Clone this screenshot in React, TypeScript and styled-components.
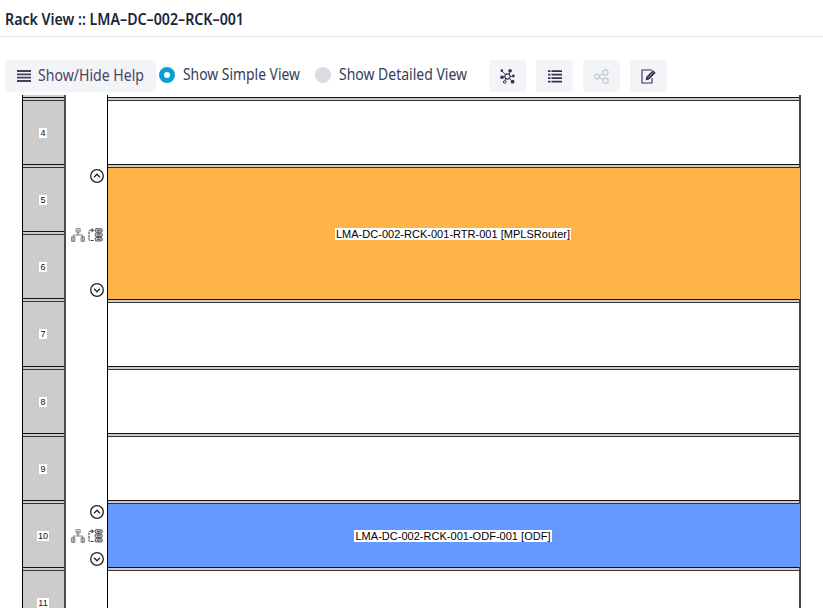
import React from "react";
import styled, { createGlobalStyle } from "styled-components";

const Global = createGlobalStyle`
  * { box-sizing: border-box; }
  html, body { margin: 0; background: #fff; overflow: hidden; }
`;
const Page = styled.div`
  width: 823px; height: 608px; overflow: hidden; background: #fff;
  display: flex; flex-direction: column;
  font-family: "Noto Sans", sans-serif; color: #1f2a3c;
`;
const Header = styled.header`
  height: 37px; flex: none; padding: 3px 5px 0; border-bottom: 1px solid #e4e7ed;
  display: flex; align-items: center;
`;
const Title = styled.h1`
  margin: 0; font-size: 15.5px; line-height: 20px; font-weight: 600; color: #1b2638;
  display: flex; gap: 3px;
`;
const Fit = styled.svg`display: block; flex: none; overflow: visible;`;
const Toolbar = styled.div`
  height: 58px; flex: none; padding: 23px 0 0 5px; display: flex; align-items: flex-start;
`;
const HelpButton = styled.button`
  width: 151px; height: 32px; border: 0; border-radius: 4px; background: #f3f4f7; padding: 0 0 0 12px;
  display: flex; align-items: center; gap: 7px; flex: none; font-family: inherit;
`;
const Radio = styled.label<{ $left: number }>`
  display: flex; align-items: center; height: 30px; margin-left: ${p => p.$left}px; gap: 8px;
`;
const Dot = styled.span<{ $on?: boolean }>`
  width: 16px; height: 16px; border-radius: 50%; flex: none;
  background: ${p => (p.$on ? "#fff" : "#dadde3")};
  border: ${p => (p.$on ? "5px solid #06a0d3" : "0")};
`;
const Tools = styled.div`display: flex; gap: 10px; margin-left: 22px;`;
const Tool = styled.button`
  width: 37px; height: 32px; border: 0; border-radius: 4px; background: #f3f4f7; padding: 0;
  display: flex; align-items: center; justify-content: center;
`;
const Rack = styled.main`
  flex: none; height: 513px; padding-left: 22px; display: grid; grid-template-columns: 44px 41px 694px;
  overflow: hidden;
`;
const Units = styled.div`
  background: #ccc; border-left: 1px solid #000; border-right: 2px solid #4c4c4c;
  display: flex; flex-direction: column;
`;
const Slots = styled.div`
  border-left: 1px solid #000; border-right: 2px solid #444; display: flex; flex-direction: column;
`;
const Divider = styled.div`
  height: 4px; flex: none; background: #ccc; border-top: 1px solid #111; border-bottom: 1px solid #333;
`;
const Cell = styled.div<{ $h: number; $bg?: string }>`
  height: ${p => p.$h}px; flex: none; background: ${p => p.$bg || "transparent"};
  margin-right: ${p => (p.$bg ? "-1px" : "0")};
  display: flex; align-items: center; justify-content: center;
`;
const Num = styled.span`
  background: #fff; color: #111; font: 9px/10px "Liberation Sans", Arial, sans-serif; padding: 0 1px; margin: 0 0 0 -1px;
`;
const Name = styled.span`
  background: #fff; color: #000; font: 11px/12px "Liberation Sans", Arial, sans-serif; padding: 0 1px;
  margin-left: -2px; letter-spacing: 0.02px; white-space: nowrap;
`;
const Controls = styled.div`display: flex; flex-direction: column;`;
const Group = styled.div<{ $top: number; $h: number }>`
  margin-top: ${p => p.$top}px; height: ${p => p.$h}px; flex: none; padding: 0 3px 0 5px;
  display: flex; flex-direction: column; align-items: flex-end; justify-content: space-between;
`;
const Actions = styled.div<{ $drop: number }>`
  display: flex; gap: 3px; width: 32px; margin-right: 1px; padding-top: ${p => p.$drop}px;
`;

const FitText = ({ text, width, size, weight = 400, color = "#34405a" }: {
  text: string; width: number; size: number; weight?: number; color?: string;
}) => (
  <Fit width={width} height="20">
    <text x="0" y="15" textLength={width} lengthAdjust="spacingAndGlyphs" fontSize={size} fontWeight={weight} fill={color}>{text}</text>
  </Fit>
);

const Lines = () => (
  <svg width="14" height="12" viewBox="0 0 14 12">
    <path d="M0 1h14M0 4.3h14M0 7.7h14M0 11h14" stroke="#454059" strokeWidth="1.8" />
  </svg>
);
const ListIcon = () => (
  <svg width="14" height="13" viewBox="0 0 14 13">
    <path d="M0 1.2h2.5M0 4.7h2.5M0 8.2h2.5M0 11.7h2.5M3.5 1.2H14M3.5 4.7H14M3.5 8.2H14M3.5 11.7H14" stroke="#37314d" strokeWidth="1.7" />
  </svg>
);
const Hub = () => (
  <svg width="15" height="15" viewBox="0 0 15 15" stroke="#37314d" fill="none">
    <circle cx="7.5" cy="7.5" r="2.6" strokeWidth="1.1" />
    <path d="M5.6 5.6 2 2M9.3 5.5 10 2M10.2 7.5H14M9.5 9.5l3.2 3M5.8 9.3 4.8 12M4.8 7.8H1.5" strokeWidth=".9" />
    <g fill="#37314d" stroke="none">
      <circle cx="1.8" cy="1.6" r="1.3" /><circle cx="10.1" cy="1.8" r="1.8" /><circle cx="13.4" cy="7" r="1.4" />
      <circle cx="12.6" cy="12.7" r="1.9" /><circle cx="2" cy="8.2" r="1.8" />
    </g>
    <circle cx="4.7" cy="13" r="1.3" />
  </svg>
);
const Share = () => (
  <svg width="15" height="15" viewBox="0 0 15 15" fill="none" stroke="#c5c8d1" strokeWidth="1.2">
    <circle cx="3" cy="7.5" r="2.3" /><circle cx="11.5" cy="3.5" r="2.6" /><circle cx="11.5" cy="11.7" r="2.6" />
    <path d="M5 6.8 9.2 4.7M5 8.3l4.2 2.2" />
  </svg>
);
const Edit = () => (
  <svg width="15" height="15" viewBox="0 0 15 15" fill="none" stroke="#37314d">
    <path d="M11 1H1v13h10V9" strokeWidth="1.1" />
    <path d="m5.2 10.8.7-3.1 6-6 2.3 2.1-6.1 6.1z" fill="#37314d" /><path d="m6.8 8.9 5.5-5.5" stroke="#bbb8c4" strokeWidth=".8" />
  </svg>
);
const Chevron = ({ down = false }: { down?: boolean }) => (
  <svg width="14" height="14" viewBox="0 0 14 14" fill="none" stroke="#222" strokeWidth="1.3">
    <circle cx="7" cy="7" r="6.3" />
    <path d={down ? "m4 5.8 3 3 3-3" : "m4 8.2 3-3 3 3"} />
  </svg>
);
const Tree = () => (
  <svg width="14" height="14" viewBox="0 0 14 14" fill="none" stroke="#777" strokeWidth=".9">
    <path d="M5 .7h4.2v3.2H5zM7 4v3M2.5 9V7h9v2M5.8 2.4h2.5M5.8 5h2.5" />
    <path d="M.6 8.8h3.3v4.6H.6zM10.1 8.8h3.3v4.6h-3.3zM2.2 8.8v4.6M11.8 8.8v4.6" fill="#ddd" />
  </svg>
);
const Move = () => (
  <svg width="15" height="14" viewBox="0 0 15 14" fill="none" stroke="#333">
    <path d="M5.5 12.5H2Q1 12.5 1 11.5V3.2Q1 2.2 2 2.2h3" strokeDasharray="2.6 .8" /><path d="M3.6 0 6 2.2 3.6 4.4z" fill="#333" stroke="none" />
    <g fill="#ccc" strokeWidth=".8">
      <rect x="7.2" y=".7" width="7" height="3.4" rx="1" /><rect x="7.2" y="5.1" width="7" height="3.4" rx="1" /><rect x="7.2" y="9.6" width="7" height="3.4" rx="1" />
    </g>
    <path d="M9 2.4h3.5M9 6.8h3.5M9 11.3h3.5M10.7 4v1M10.7 8.5v1" strokeWidth=".8" />
  </svg>
);

const units = [[4, 63], [5, 63], [6, 63], [7, 64], [8, 63], [9, 63], [10, 63], [11, 64]];
const slots = [
  { h: 63 },
  { h: 131, bg: "#ffb44a", name: "LMA-DC-002-RCK-001-RTR-001 [MPLSRouter]" },
  { h: 63 }, { h: 63 }, { h: 63 },
  { h: 63, bg: "#6699ff", name: "LMA-DC-002-RCK-001-ODF-001 [ODF]" },
  { h: 64 },
];
const ControlGroup = ({ top, h, drop = 0 }: { top: number; h: number; drop?: number }) => (
  <Group $top={top} $h={h}><Chevron /><Actions $drop={drop}><Tree /><Move /></Actions><Chevron down /></Group>
);

export default function App() {
  return (
    <Page>
      <Global />
      <Header>
        <Title><FitText text="Rack View :: LMA–DC–002–RCK–001" width={239} size={15.5} weight={600} color="#1b2638" /></Title>
      </Header>
      <Toolbar>
        <HelpButton><Lines /><FitText text="Show/Hide Help" width={106} size={15.7} color="#49445f" /></HelpButton>
        <Radio $left={3}><Dot $on /><FitText text="Show Simple View" width={117} size={15.7} /></Radio>
        <Radio $left={15}><Dot /><FitText text="Show Detailed View" width={128} size={15.7} /></Radio>
        <Tools><Tool><Hub /></Tool><Tool><ListIcon /></Tool><Tool><Share /></Tool><Tool><Edit /></Tool></Tools>
      </Toolbar>
      <Rack>
        <Units>
          <Cell $h={2} />
          {units.map(([n, h]) => <React.Fragment key={n}><Divider /><Cell $h={h}><Num>{n}</Num></Cell></React.Fragment>)}
        </Units>
        <Controls><ControlGroup top={74} h={128} drop={4} /><ControlGroup top={208} h={61} /></Controls>
        <Slots>
          <Cell $h={2} />
          {slots.map((s, i) => <React.Fragment key={i}><Divider /><Cell $h={s.h} $bg={s.bg}>{s.name && <Name>{s.name}</Name>}</Cell></React.Fragment>)}
        </Slots>
      </Rack>
    </Page>
  );
}
